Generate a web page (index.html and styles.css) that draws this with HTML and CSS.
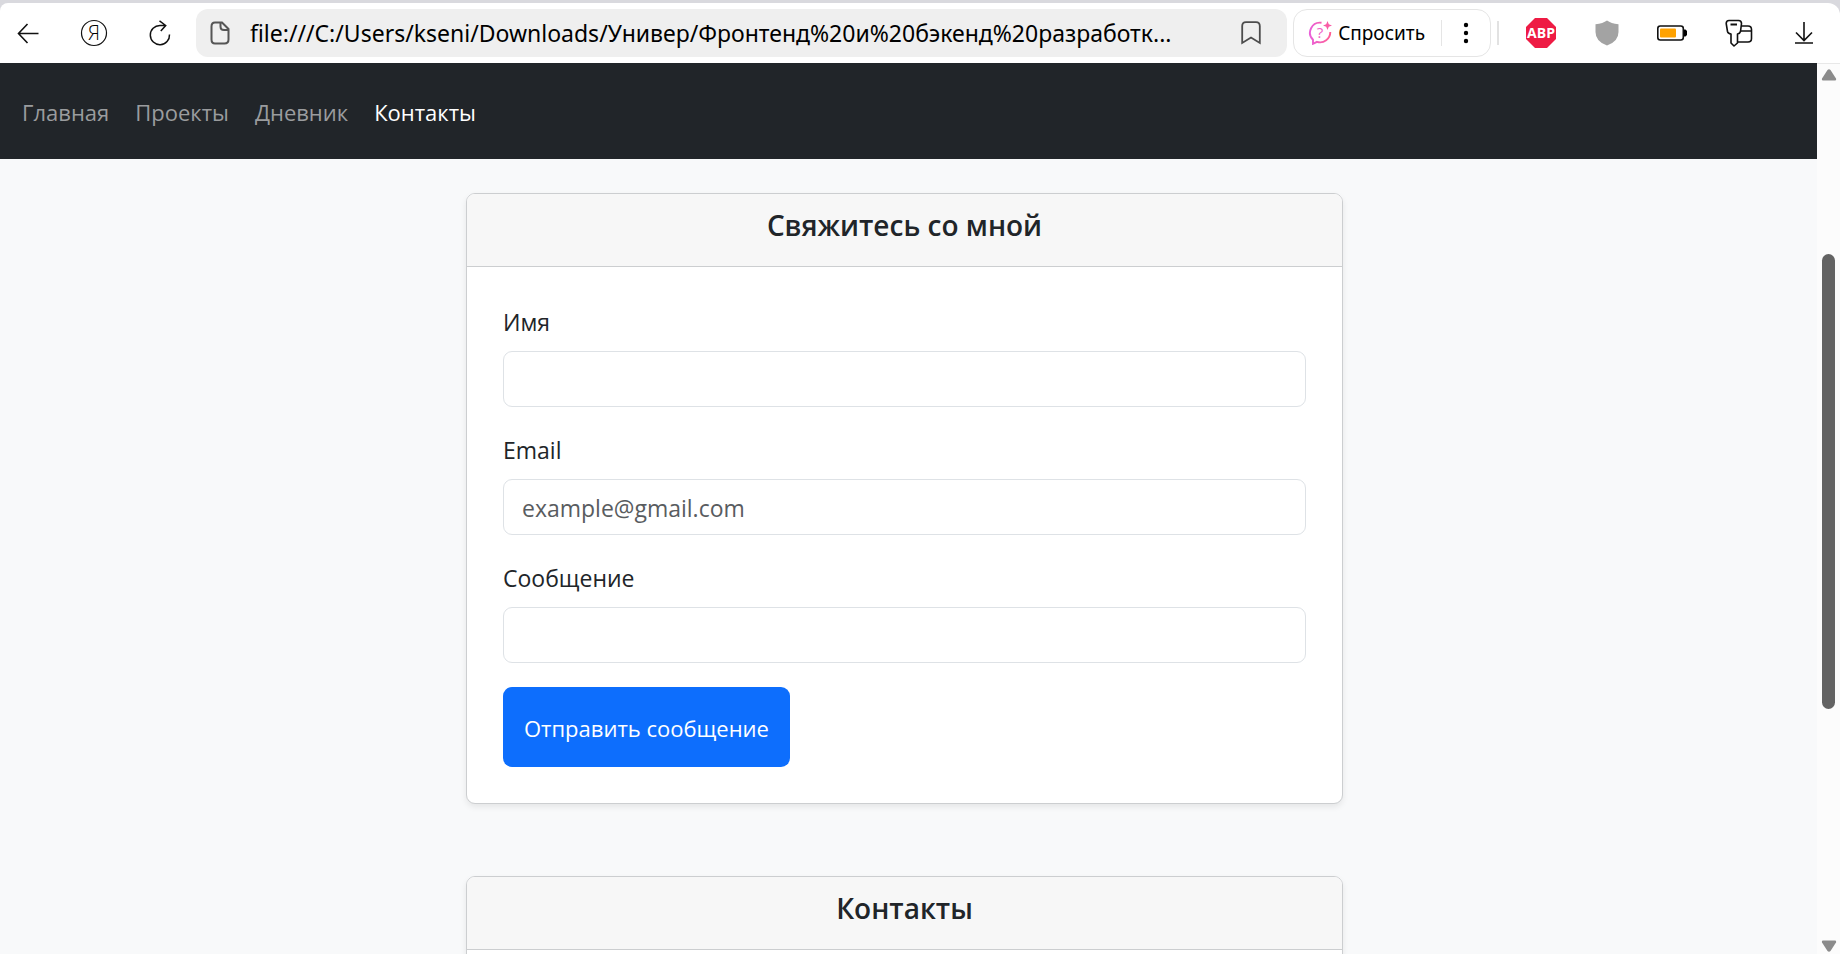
FILE: index.html
```html
<!DOCTYPE html>
<html lang="ru">
<head>
  <meta charset="utf-8">
  <title>Контакты</title>
  <link rel="stylesheet" href="styles.css">
</head>
<body class="window">
  <header class="toolbar">
    <button class="tool" type="button" aria-label="Назад">
      <svg width="24" height="24" viewBox="0 0 24 24" fill="none" stroke="#111" stroke-width="1.6"><path d="M22.500 12.500H2.500M11.500 3L2.500 12.500L11.500 22"/></svg>
    </button>
    <button class="tool" type="button" aria-label="Яндекс">
      <svg width="28" height="28" viewBox="0 0 28 28"><circle cx="14" cy="14" r="12.500" fill="none" stroke="#111" stroke-width="1.200"/><text class="ya-letter" x="14" y="21" text-anchor="middle">Я</text></svg>
    </button>
    <button class="tool" type="button" aria-label="Обновить">
      <svg width="24" height="26" viewBox="0 0 24 26" fill="none" stroke="#111" stroke-width="1.500"><path d="M21.500 14.500A9.600 9.600 0 1 1 12 5.500H17.500M11.500 0.800L17.700 5.500L12.800 11"/></svg>
    </button>
    <div class="address">
      <svg width="20" height="24" viewBox="0 0 20 24" fill="none" stroke="#555" stroke-width="2"><path d="M5 1.500H12L18.500 8V18.500Q18.500 22.500 14.500 22.500H5Q1.500 22.500 1.500 18.500V5.500Q1.500 1.500 5 1.500ZM10.500 1.500V5.500Q10.500 9 14 9H18.500"/></svg>
      <input class="address-input" type="text" aria-label="Адрес страницы" value="file:///C:/Users/kseni/Downloads/Универ/Фронтенд%20и%20бэкенд%20разработк...">
      <button class="bookmark" type="button" aria-label="Добавить в закладки">
        <svg width="20" height="24" viewBox="0 0 20 24" fill="none" stroke="#4d4d4d" stroke-width="1.800"><path d="M1.200 22V5Q1.200 1.200 5 1.200H15Q18.800 1.200 18.800 5V22L10 16.500Z"/></svg>
      </button>
    </div>
    <div class="assistant">
      <button class="ask" type="button">
        <svg width="24" height="24" viewBox="0 0 24 24" fill="none">
          <defs><linearGradient id="pink" x1="0" x2="1"><stop stop-color="#e95fd8"/><stop offset="1" stop-color="#ff5e94"/></linearGradient></defs>
          <path d="M13.500 1.800A10 10 0 0 0 5 18.800V22.800L9 20.800A10.200 10.200 0 0 0 22.300 11" stroke="url(#pink)" stroke-width="1.900"/>
          <path d="M19.500 0L20.800 3.200L24 4.500L20.800 5.800L19.500 9L18.200 5.800L15 4.500L18.200 3.200Z" fill="#f95ca6"/>
          <text class="ask-mark" x="12" y="17" text-anchor="middle">?</text>
        </svg>
        <span>Спросить</span>
      </button>
      <button class="more" type="button" aria-label="Ещё">
        <svg width="6" height="22" viewBox="0 0 6 22"><circle cx="3" cy="3" r="2.200"/><circle cx="3" cy="11" r="2.200"/><circle cx="3" cy="19" r="2.200"/></svg>
      </button>
    </div>
    <div class="extensions">
      <button class="tool" type="button" aria-label="Adblock Plus">
        <svg width="30" height="30" viewBox="0 0 30 30"><path d="M9 0H21L30 9V21L21 30H9L0 21V9Z" fill="#ee1b44"/><text class="abp-text" x="15" y="20" text-anchor="middle">ABP</text></svg>
      </button>
      <button class="tool" type="button" aria-label="Защита">
        <svg width="24" height="26" viewBox="0 0 24 26"><path d="M12 0.500Q16 3.500 23.500 4.200V12Q23.500 21.500 12 25.500Q0.500 21.500 0.500 12V4.200Q8 3.500 12 0.500Z" fill="#a3a3a3"/></svg>
      </button>
      <button class="tool" type="button" aria-label="Батарея">
        <svg width="32" height="16" viewBox="0 0 32 16"><rect x="0.800" y="1" width="25.500" height="14" rx="2.500" fill="#fff" stroke="#111" stroke-width="1.600"/><rect x="3" y="3.500" width="16" height="9" rx="1" fill="#ffa200"/><path d="M27 4.500H28.500L30 6V10L28.500 11.500H27Z" fill="#000"/></svg>
      </button>
      <button class="tool" type="button" aria-label="Пароли">
        <svg width="28" height="28" viewBox="0 0 28 28" fill="none" stroke="#111" stroke-width="1.600" stroke-linejoin="round"><path d="M16 7H23Q26.500 7 26.500 10.500V19.500Q26.500 23 23 23H13M15 12H26"/><path d="M4 1.500H13.500Q16.500 1.500 16.500 4.500L15.500 12.500Q15 14.500 12.500 15V24L9 27L6 24V15Q3 14.500 2.500 12.500L1.200 4.500Q1.200 1.500 4 1.500Z" fill="#fff"/><path d="M5.500 5.500H12" stroke-width="2"/></svg>
      </button>
      <button class="tool" type="button" aria-label="Загрузки">
        <svg width="18" height="22" viewBox="0 0 18 22" fill="none" stroke="#111" stroke-width="1.600"><path d="M9 0V18M1 10.500L9 18.500L17 10.500M0 21H18"/></svg>
      </button>
    </div>
  </header>

  <div class="viewport">
    <div class="page">
      <nav class="navbar">
        <a class="nav-link" href="#home">Главная</a>
        <a class="nav-link" href="#projects">Проекты</a>
        <a class="nav-link" href="#diary">Дневник</a>
        <a class="nav-link active" href="#contacts" aria-current="page">Контакты</a>
      </nav>
      <main class="content">
        <div class="container">
          <section class="card">
            <div class="card-header"><h1 class="card-title">Свяжитесь со мной</h1></div>
            <form class="card-body">
              <div class="field">
                <label class="form-label" for="name">Имя</label>
                <input class="form-control" id="name" type="text">
              </div>
              <div class="field">
                <label class="form-label" for="email">Email</label>
                <input class="form-control" id="email" type="email" placeholder="example@gmail.com">
              </div>
              <div class="field">
                <label class="form-label" for="message">Сообщение</label>
                <input class="form-control" id="message" type="text">
              </div>
              <button class="submit" type="submit">Отправить сообщение</button>
            </form>
          </section>
          <section class="card" id="contacts">
            <div class="card-header"><h2 class="card-title">Контакты</h2></div>
            <div class="card-body"></div>
          </section>
        </div>
      </main>
    </div>
    <div class="scrollbar" aria-hidden="true">
      <svg width="16" height="12" viewBox="0 0 16 12"><path d="M6.500 1Q8-0.500 9.500 1L15 9.500Q15.500 11.500 14 11.500H2Q0.500 11.500 1 9.500Z" fill="#8b8b8b"/></svg>
      <div class="track"><div class="thumb"></div></div>
      <svg width="16" height="12" viewBox="0 0 16 12"><path d="M6.500 11Q8 12.500 9.500 11L15 2.500Q15.500 0.500 14 0.500H2Q0.500 0.500 1 2.500Z" fill="#8b8b8b"/></svg>
    </div>
  </div>
</body>
</html>
```
FILE: styles.css
```css
*, *::before, *::after { box-sizing: border-box; }

.window {
  display: flex;
  flex-direction: column;
  height: 100vh;
  margin: 0;
  padding-top: 3px;
  overflow: hidden;
  background: #d9d9de;
  color: #212529;
  font-family: "Open Sans", "Noto Sans", sans-serif;
  font-size: 23px;
  line-height: 36px;
}

button, input {
  margin: 0;
  padding: 0;
  border: 0;
  background: none;
  color: inherit;
  font: inherit;
}

svg { display: block; flex: none; }

/* Browser toolbar */
.toolbar {
  display: flex;
  flex: none;
  align-items: center;
  height: 60px;
  padding-right: 4px;
  border-radius: 8px 12px 0 0;
  background: #fff;
  color: #000;
  font-family: "Noto Sans", "Open Sans", sans-serif;
}

.tool {
  display: flex;
  flex: none;
  align-items: center;
  justify-content: center;
  width: 66px;
  height: 48px;
}

.toolbar > .tool:first-child { width: 61px; padding-right: 5px; }

.ya-letter { font: 300 20px "Open Sans", sans-serif; }
.ask-mark { fill: #f062c8; font: 400 15px "Open Sans", sans-serif; }
.abp-text { fill: #fff; font: 700 14px "Open Sans", sans-serif; }

.address {
  display: flex;
  flex: 1;
  align-items: center;
  min-width: 0;
  height: 48px;
  margin-left: 3px;
  padding: 0 26px 0 14px;
  border-radius: 12px;
  background: #efefef;
}

.address-input {
  flex: 1;
  min-width: 0;
  margin: 0 20px;
  font-size: 23px;
}

.assistant {
  display: flex;
  flex: none;
  align-items: center;
  height: 48px;
  margin-left: 6px;
  border: 1px solid #e5e5e5;
  border-radius: 14px;
}

.ask {
  display: flex;
  align-items: center;
  gap: 6px;
  height: 26px;
  padding: 0 16px 0 14px;
  border-right: 1px solid #e5e5e5;
  font-size: 19px;
  line-height: 26px;
}

.more {
  display: flex;
  justify-content: center;
  width: 48px;
}

.extensions {
  display: flex;
  align-items: center;
  margin-left: 6px;
}

.extensions::before {
  content: "";
  width: 2px;
  height: 24px;
  margin-right: 9px;
  background: #e2e2e2;
}

.extensions .tool:last-child { width: 64px; }

/* Page area */
.viewport { display: flex; flex: 1; min-height: 0; }

.page {
  flex: 1;
  min-width: 0;
  overflow: hidden;
  background: #f8f9fa;
}

.navbar {
  display: flex;
  gap: 26px;
  padding: 31px 22px 29px;
  background: #212529;
  font-size: 22px;
}

.nav-link { color: #9a9c9e; text-decoration: none; }
.nav-link.active { color: #fff; }

.content { padding: 34px 8px 0 0; }

.container {
  display: grid;
  gap: 72px;
  max-width: 877px;
  margin: 0 auto;
}

.card {
  border: 1px solid #ccced0;
  border-radius: 9px;
  background: #fff;
  box-shadow: 0 3px 6px rgba(0, 0, 0, 0.08);
}

.card-header {
  padding: 13px 24px 23px;
  border-bottom: 1px solid #ccced0;
  border-radius: 8px 8px 0 0;
  background: #f7f7f7;
}

.card-title {
  margin: 0;
  font-size: 28px;
  font-weight: 600;
  line-height: 36px;
  text-align: center;
}

.card-body { padding: 36px; }

.field {
  display: grid;
  gap: 12px;
  margin-bottom: 24px;
}

.form-label {
  padding-top: 2px;
  line-height: 34px;
}

.form-control {
  width: 100%;
  height: 56px;
  padding: 2px 18px 0;
  border: 1px solid #dee2e6;
  border-radius: 9px;
}

.form-control::placeholder { color: #595c5f; opacity: 1; }

.submit {
  height: 80px;
  padding: 2px 21px 0;
  border-radius: 9px;
  background: #0d6efd;
  color: #fff;
  font-size: 22px;
}

.scrollbar {
  display: flex;
  flex: none;
  flex-direction: column;
  align-items: center;
  width: 23px;
  padding: 5px 0 2px;
  border-top: 1px solid #e8e8e8;
  background: #fcfcfc;
}

.track { flex: 1; width: 13px; }

.thumb {
  height: 53%;
  margin-top: 173px;
  border-radius: 7px;
  background: #636363;
}
```
